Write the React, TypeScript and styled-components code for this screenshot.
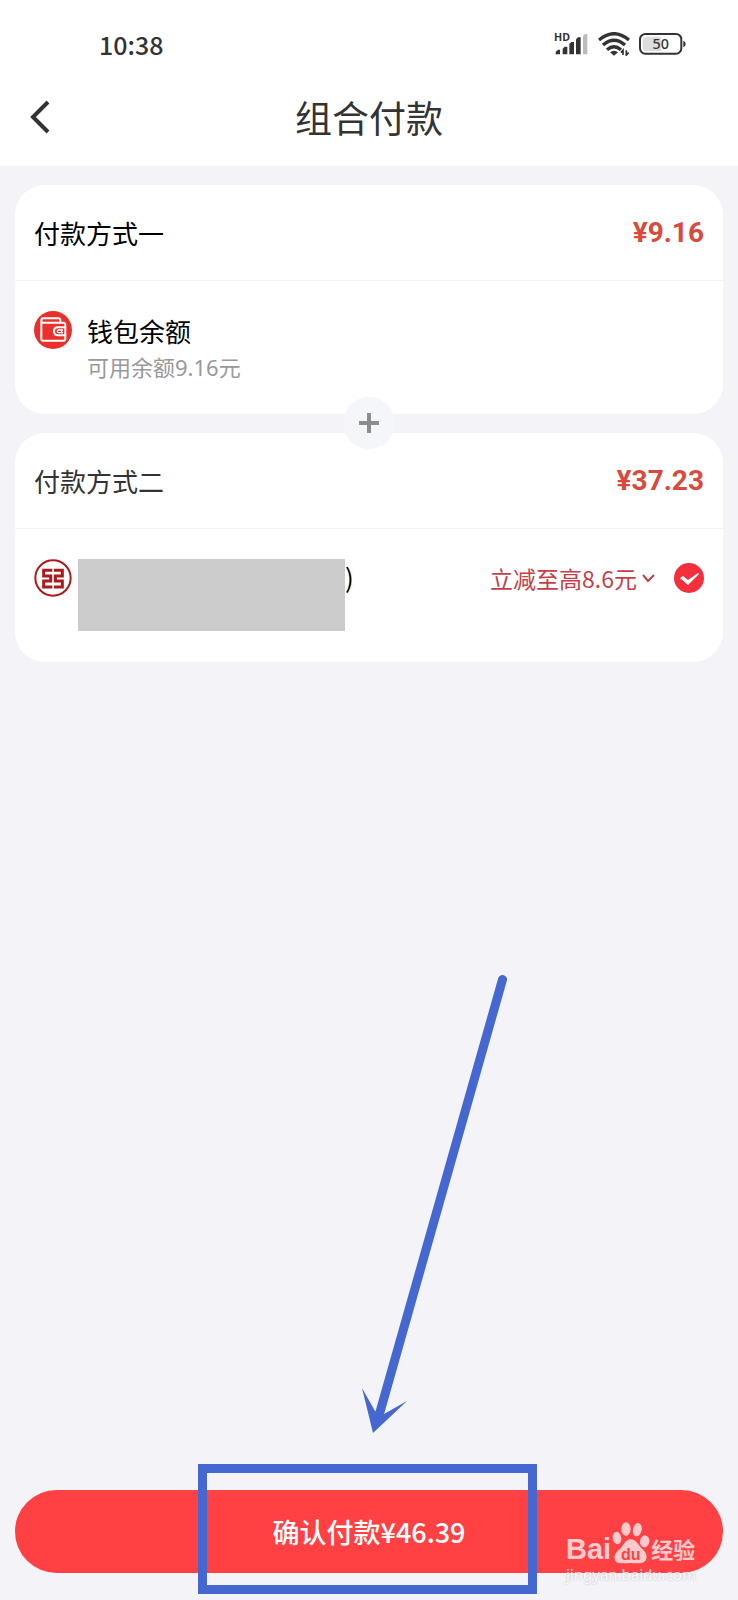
import React from "react";
import styled, { createGlobalStyle } from "styled-components";

const GlobalStyle = createGlobalStyle`
  * { box-sizing: border-box; }
  body {
    margin: 0;
    background: #f3f3f8;
    color: #333;
    font-family: "Noto Sans CJK SC", "Noto Sans", sans-serif;
  }
  button { font: inherit; border: 0; background: none; padding: 0; cursor: pointer; }
`;

const Page = styled.div`
  display: flex;
  flex-direction: column;
  min-height: 100vh;
`;

const Header = styled.header`
  background: #fff;
`;

const StatusBar = styled.div`
  display: flex;
  align-items: center;
  justify-content: space-between;
  height: 72px;
  padding: 16px 51px 0 99px;
`;

const Clock = styled.time`
  font-size: 25px;
  line-height: 32px;
  font-weight: 500;
`;

const StatusIcons = styled.div`
  display: flex;
  align-items: center;
  gap: 9px;
`;

const NavBar = styled.div`
  display: grid;
  grid-template-columns: 48px 1fr 48px;
  align-items: center;
  height: 94px;
  padding: 0 16px 4px;
`;

const BackButton = styled.button`
  display: flex;
  align-items: center;
  justify-content: center;
  width: 48px;
  height: 48px;
`;

const Title = styled.h1`
  margin: 0;
  font-size: 37px;
  line-height: 48px;
  font-weight: 400;
  text-align: center;
`;

const Main = styled.main`
  display: flex;
  flex-direction: column;
  gap: 19px;
  padding: 19px 15px;
`;

const Card = styled.section`
  position: relative;
  min-height: 229px;
  border-radius: 30px;
  background: #fff;
`;

const CardHeader = styled.div`
  display: flex;
  align-items: center;
  justify-content: space-between;
  height: 96px;
  padding: 0 19px;
  border-bottom: 1px solid #f3f3f5;
`;

const CardTitle = styled.h2<{ $strong?: boolean }>`
  margin: 0;
  font-size: 26px;
  line-height: 36px;
  font-weight: 400;
  color: ${(p) => (p.$strong ? "#000" : "#333")};
`;

const Amount = styled.span`
  font-family: Roboto, "Noto Sans CJK SC", sans-serif;
  font-size: 28px;
  line-height: 36px;
  font-weight: 700;
  color: #d94a3d;
`;

const CardBody = styled.div`
  display: flex;
  align-items: flex-start;
  padding: 30px 19px 0;
`;

const Method = styled.div`
  display: flex;
  flex-direction: column;
  margin-left: 15px;
  padding-top: 2px;
`;

const MethodName = styled.span`
  font-size: 26px;
  line-height: 36px;
  color: #000;
`;

const MethodNote = styled.span`
  font-family: "Noto Sans", "Noto Sans CJK SC", sans-serif;
  font-size: 22px;
  line-height: 36px;
  color: #999;
`;

const Mask = styled.div`
  width: 267px;
  height: 72px;
  margin-left: 6px;
  background: #ccc;
`;

const PlusBadge = styled.span`
  position: absolute;
  z-index: 1;
  left: 50%;
  bottom: -35px;
  display: flex;
  align-items: center;
  justify-content: center;
  width: 52px;
  height: 52px;
  margin-left: -26px;
  border-radius: 50%;
  background: #f5f6fa;
`;

const Options = styled.div`
  display: flex;
  align-items: center;
  gap: 19px;
  height: 38px;
  margin-left: auto;
`;

const Discount = styled.button`
  display: flex;
  align-items: center;
  gap: 5px;
  color: #c63f48;
  font-size: 23px;
  line-height: 30px;
`;

const RadioLabel = styled.label`
  position: relative;
  display: block;
  width: 30px;
  height: 30px;
`;

const Radio = styled.input`
  appearance: none;
  display: block;
  width: 30px;
  height: 30px;
  margin: 0;
  border: 2px solid #ccc;
  border-radius: 50%;
  &:checked {
    border-color: #f52f3c;
    background: #f52f3c;
  }
`;

const Tick = styled.svg`
  position: absolute;
  left: 0;
  top: 0;
  pointer-events: none;
`;

const Footer = styled.footer`
  position: relative;
  margin-top: auto;
  padding: 0 15px 27px;
`;

const PayButton = styled.button`
  display: block;
  width: 100%;
  height: 83px;
  border-radius: 42px;
  background: #ff4144;
  color: #fff;
  font-size: 27px;
  line-height: 36px;
  font-weight: 500;
`;

const Highlight = styled.div`
  position: absolute;
  left: 50%;
  bottom: 6px;
  width: 339px;
  height: 130px;
  margin-left: -171px;
  border: 9px solid #4468d0;
  pointer-events: none;
`;

const Arrow = styled.svg`
  position: absolute;
  left: 50%;
  bottom: 160px;
  margin-left: -9px;
  pointer-events: none;
`;

const Watermark = styled.div`
  position: absolute;
  right: 40px;
  bottom: 16px;
  width: 132px;
  color: #fff;
  opacity: 0.72;
  pointer-events: none;
`;

const Brand = styled.div`
  display: flex;
  align-items: flex-end;
  height: 44px;
`;

const BrandLatin = styled.span`
  font-family: "Liberation Sans", sans-serif;
  font-size: 29px;
  line-height: 30px;
  font-weight: 700;
`;

const BrandHan = styled.span`
  font-size: 22px;
  line-height: 32px;
  font-weight: 700;
`;

const BrandUrl = styled.div`
  font-family: "Noto Sans", sans-serif;
  font-size: 15px;
  line-height: 20px;
  text-shadow: 0 0 2px #999;
`;

const SignalIcon = () => (
  <svg width="35" height="32" viewBox="0 -12 105 96" aria-hidden="true">
    <text x="0" y="27" fontFamily="Noto Sans" fontSize="32" fontWeight="700" fill="#333">HD</text>
    <g fill="#333">
      <path d="M5 60l7-7h6v14H5z" />
      <path d="M26 50l6-6h8v23H26z" />
      <path d="M46 36l6-6h8v37H46z" />
      <path d="M66 22l6-6h8v51H66z" />
    </g>
    <path d="M87 12l6-6h7v61H87z" fill="#bbb" />
  </svg>
);

const WifiIcon = () => (
  <svg width="32" height="24" viewBox="0 0 96 72" fill="none" stroke="#333" aria-hidden="true">
    <g strokeWidth="10">
      <path d="M3 24Q48-14 93 24" />
      <path d="M15 39Q48 10 81 39" />
      <path d="M27 53Q48 35 69 53" />
    </g>
    <path d="M36 61q12-10 24 0L48 71z" fill="#333" stroke="none" />
    <path d="M75 69V55l-6 7M85 55v14l7-7" strokeWidth="5" />
  </svg>
);

const BatteryIcon = () => (
  <svg width="48" height="22" viewBox="0 0 144 66" aria-hidden="true">
    <rect x="3" y="3" width="124" height="59" rx="16" fill="#fff" stroke="#333" strokeWidth="6" />
    <path d="M24 11h42v43H24q-13 0-13-12V23q0-12 13-12z" fill="#ddd" />
    <path d="M133 23q7 2 7 10t-7 10z" fill="#333" />
    <text x="65" y="48" textAnchor="middle" fontFamily="Noto Sans" fontSize="43" fontWeight="500" fill="#333">50</text>
  </svg>
);

const WalletIcon = () => (
  <svg width="38" height="38" viewBox="0 0 114 114" fill="none" stroke="#fff" strokeWidth="6" aria-hidden="true">
    <circle cx="57" cy="57" r="57" fill="#e9302b" stroke="none" />
    <path d="M22 28V84q0 5 5 5H88q6 0 6-6V41q0-6-6-6H28q-6 0-6-6 0-7 6-7H73q6 0 6 6v6" />
    <path d="M93 49H72q-12 0-12 12t12 12H93" />
    <path d="M87 57H74q-4 0-4 4t4 4H87M83 55v12" strokeWidth="4" />
  </svg>
);

const BankIcon = () => (
  <svg width="38" height="38" viewBox="0 0 114 114" fill="none" stroke="#ab1a1c" aria-hidden="true">
    <circle cx="57" cy="57" r="53" strokeWidth="6" />
    <g strokeWidth="9">
      <path d="M55 34H29V51H50V66H29V84H55" />
      <path d="M60 34H85V51H64V66H85V84H60" />
    </g>
  </svg>
);

const PawIcon = () => (
  <svg width="40" height="42" viewBox="0 0 120 126" fill="#fff" aria-hidden="true">
    <ellipse cx="18" cy="48" rx="13" ry="19" transform="rotate(-8 18 48)" />
    <ellipse cx="45" cy="21" rx="14" ry="20" />
    <ellipse cx="79" cy="23" rx="13" ry="20" transform="rotate(12 79 23)" />
    <ellipse cx="101" cy="58" rx="14" ry="18" transform="rotate(8 101 58)" />
    <path d="M59 52c15 0 22 15 32 26 14 13 19 22 14 35-5 12-19 11-46 10-28 1-42 3-47-10-5-15 5-24 18-36 9-9 14-25 29-25z" />
    <text x="59" y="113" textAnchor="middle" fontFamily="Liberation Sans" fontSize="48" fontWeight="700" fill="#ff4144">du</text>
  </svg>
);

export default function App() {
  return (
    <Page>
      <GlobalStyle />
      <Header>
        <StatusBar>
          <Clock>10:38</Clock>
          <StatusIcons>
            <SignalIcon />
            <WifiIcon />
            <BatteryIcon />
          </StatusIcons>
        </StatusBar>
        <NavBar>
          <BackButton aria-label="返回">
            <svg width="20" height="34" viewBox="0 0 20 34" fill="none" stroke="#333" strokeWidth="4">
              <path d="M18 2L3 17l15 15" />
            </svg>
          </BackButton>
          <Title>组合付款</Title>
        </NavBar>
      </Header>

      <Main>
        <Card>
          <CardHeader>
            <CardTitle $strong>付款方式一</CardTitle>
            <Amount>¥9.16</Amount>
          </CardHeader>
          <CardBody>
            <WalletIcon />
            <Method>
              <MethodName>钱包余额</MethodName>
              <MethodNote>可用余额9.16元</MethodNote>
            </Method>
          </CardBody>
          <PlusBadge>
            <svg width="20" height="20" viewBox="0 0 20 20" stroke="#8c8c8c" strokeWidth="4" aria-hidden="true">
              <path d="M10 0v20M0 10h20" />
            </svg>
          </PlusBadge>
        </Card>

        <Card>
          <CardHeader>
            <CardTitle>付款方式二</CardTitle>
            <Amount>¥37.23</Amount>
          </CardHeader>
          <CardBody>
            <BankIcon />
            <Mask />
            <MethodName>)</MethodName>
            <Options>
              <Discount>
                立减至高8.6元
                <svg width="13" height="9" viewBox="0 0 13 9" fill="none" stroke="#c63f48" strokeWidth="2" aria-hidden="true">
                  <path d="M1 1l5 6 6-6" />
                </svg>
              </Discount>
              <RadioLabel>
                <Radio type="radio" name="method" defaultChecked aria-label="付款方式二" />
                <Tick width="30" height="30" viewBox="0 0 30 30" aria-hidden="true">
                  <path d="M6 15l3-2 5 4 10-7 1 1-11 11z" fill="#fff" />
                </Tick>
              </RadioLabel>
            </Options>
          </CardBody>
        </Card>
      </Main>

      <Footer>
        <PayButton>确认付款¥46.39</PayButton>
        <Arrow width="148" height="470" viewBox="0 0 148 470" aria-hidden="true">
          <path d="M142.500 9.500L20 442" stroke="#4468d0" strokeWidth="9" strokeLinecap="round" />
          <path d="M13 463L2 418l13 23 9 3 23-13z" fill="#4468d0" />
        </Arrow>
        <Highlight />
        <Watermark>
          <Brand>
            <BrandLatin>Bai</BrandLatin>
            <PawIcon />
            <BrandHan>经验</BrandHan>
          </Brand>
          <BrandUrl>jingyan.baidu.com</BrandUrl>
        </Watermark>
      </Footer>
    </Page>
  );
}
